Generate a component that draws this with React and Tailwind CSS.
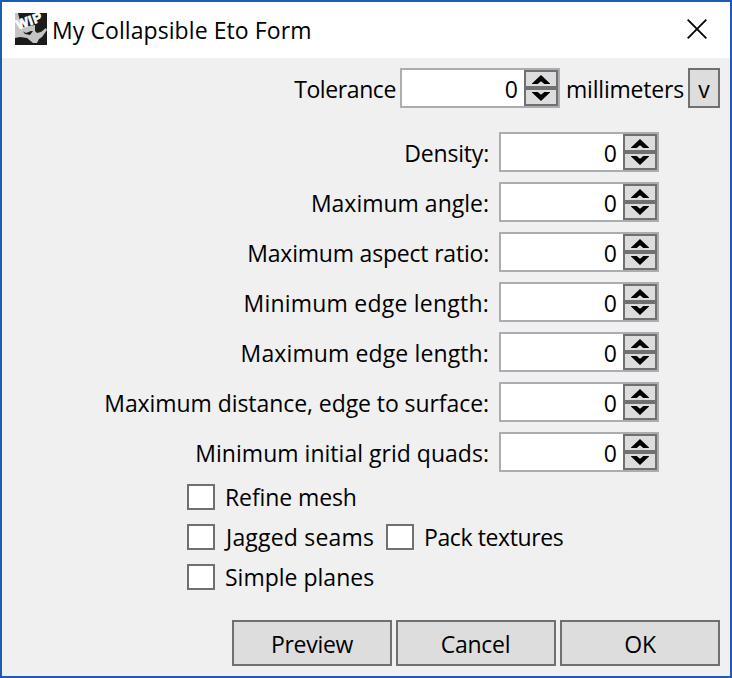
const FIELDS = [
  { label: 'Density:', tracking: 'tracking-[-0.2px]' },
  { label: 'Maximum angle:', tracking: 'tracking-[0px]' },
  { label: 'Maximum aspect ratio:', tracking: 'tracking-[-0.2px]' },
  { label: 'Minimum edge length:', tracking: 'tracking-[0.22px]' },
  { label: 'Maximum edge length:', tracking: 'tracking-[0.12px]' },
  { label: 'Maximum distance, edge to surface:', tracking: 'tracking-[-0.07px]' },
  { label: 'Minimum initial grid quads:', tracking: 'tracking-[0.02px]' },
];

function AppIcon() {
  return (
    <svg className="h-8 w-8 shrink-0 overflow-visible" viewBox="0 0 32 32" aria-hidden="true">
      <rect width="32" height="32" fill="#1b1b1b" />
      <path d="M0 0 H3 L5 8 L8 14 L20 12 L20 18 L22 20 L26 19 L31 15 L32 17 L27 24 L24 26 L22 30 L18 30 L12 25 L5 24 L0 25Z" fill="#c4c4c4" />
      <path d="M8 18.5 L11 20 L16 18 L18 18 L15 22 L10 21Z" fill="#1b1b1b" />
      <g transform="rotate(-19 3 16)">
        <text x="2.8" y="16.4" fontFamily="Liberation Sans, sans-serif" fontSize="13.2" letterSpacing="0.7" fontWeight="700" fill="#fff" stroke="#fff" strokeWidth="0.8">WIP</text>
      </g>
    </svg>
  );
}

function Stepper() {
  return (
    <div className="flex h-9 w-[156px] justify-end bg-white">
      <span className="mr-[6px] leading-[38px]">0</span>
      <div className="w-[34px] shrink-0">
        <button className="flex h-[18px] w-full justify-center border-2 border-[#707070] bg-[#ddd] pt-[3px]" aria-label="Increase">
          <svg width="18" height="9" viewBox="0 0 18 9"><path d="M9 0 L18 8.5 V9 H12.3 L9 6.3 L5.7 9 H0 V8.5Z" /></svg>
        </button>
        <button className="flex h-[18px] w-full justify-center border-2 border-[#707070] bg-[#ddd] pt-[2px]" aria-label="Decrease">
          <svg width="18" height="9" viewBox="0 0 18 9"><path d="M9 9 L18 .5 V0 H12.3 L9 2.7 L5.7 0 H0 V.5Z" /></svg>
        </button>
      </div>
    </div>
  );
}

function NumberField() {
  return <div className="h-10 w-40 shrink-0 border-2 border-[#abadb3]"><Stepper /></div>;
}

function Check({ label, tracking }) {
  return (
    <label className="flex h-[26px] items-center">
      <span className="mr-[10px] h-[26px] w-7 shrink-0 border-2 border-[#707070] bg-white" />
      <span className={tracking}>{label}</span>
    </label>
  );
}

function DialogButton({ label, tracking }) {
  return (
    <button className="h-[46px] w-40 border-2 border-[#707070] bg-[#ddd] pt-[1px]">
      <span className={tracking}>{label}</span>
    </button>
  );
}

export default function App() {
  return (
    <div className="flex h-[678px] w-[732px] flex-col overflow-hidden whitespace-nowrap border-2 border-[#1f5ab5] bg-[#f0f0f0] font-['Open_Sans',sans-serif] text-[23px] leading-8 text-black">
      <header className="flex h-14 shrink-0 items-center bg-white pl-[13px] pr-[23px]">
        <div className="mb-[2px]"><AppIcon /></div>
        <h1 className="ml-[5px] tracking-[0.08px]">My Collapsible Eto Form</h1>
        <button className="mb-[2px] ml-auto" aria-label="Close">
          <svg width="20" height="20" viewBox="0 0 20 20" fill="none" stroke="#000" strokeWidth="1.8"><path d="M.7 .7 L19.3 19.3 M19.3 .7 L.7 19.3" /></svg>
        </button>
      </header>

      <div className="mt-[10px] flex h-10 shrink-0 items-center justify-end pr-[10px]">
        <span className="mr-[4px] mt-[2px] tracking-[-0.4px]">Tolerance</span>
        <NumberField />
        <span className="ml-[6px] mr-[4px] mt-[2px] tracking-[-0.2px]">millimeters</span>
        <button className="h-10 w-8 border-2 border-[#707070] bg-[#ddd] pt-[2px]">v</button>
      </div>

      <div className="mt-6 flex flex-col gap-[10px]">
        {FIELDS.map((f) => (
          <div key={f.label} className="flex h-10 items-center justify-end pr-[71px]">
            <span className={`mr-[10px] mt-[2px] ${f.tracking}`}>{f.label}</span>
            <NumberField />
          </div>
        ))}
      </div>

      <div className="mt-3 flex flex-col gap-[14px] pl-[185px]">
        <Check label="Refine mesh" tracking="tracking-[-0.1px]" />
        <div className="flex">
          <div className="w-[199px]"><Check label="Jagged seams" tracking="ml-px tracking-[0.2px]" /></div>
          <Check label="Pack textures" tracking="tracking-[-0.4px]" />
        </div>
        <Check label="Simple planes" tracking="tracking-[0px]" />
      </div>

      <footer className="mt-[30px] flex justify-end gap-1 pr-[10px]">
        <DialogButton label="Preview" tracking="tracking-[-0.3px]" />
        <DialogButton label="Cancel" tracking="mr-px tracking-[-0.3px]" />
        <DialogButton label="OK" tracking="tracking-[-0.2px]" />
      </footer>
    </div>
  );
}
